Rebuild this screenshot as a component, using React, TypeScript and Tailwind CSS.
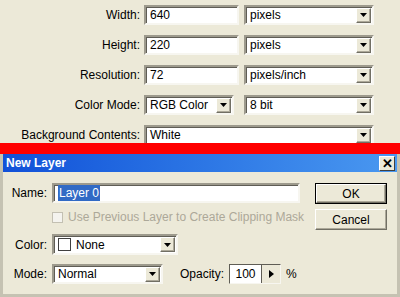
import type { ReactNode } from 'react'

const Sunken = ({ className = '', children }: { className?: string; children?: ReactNode }) => (
  <div
    className={`flex items-center h-[20px] bg-white border-2 border-t-[#9d9a8d] border-l-[#9d9a8d] border-b-[#f7f6f0] border-r-[#f7f6f0] shadow-[inset_1px_1px_0_#5f5d55] pl-[4px] ${className}`}
  >
    {children}
  </div>
)

const DropBtn = () => (
  <div className="ml-auto mr-[1px] w-[15px] h-[15px] flex items-center justify-center bg-[#ece9d8] border border-t-white border-l-white border-b-[#716f64] border-r-[#716f64] shadow-[inset_-1px_-1px_0_#aca899]">
    <svg width="7" height="4" viewBox="0 0 7 4">
      <path d="M0 0h7L3.5 4z" fill="#000" />
    </svg>
  </div>
)

const Select = ({ className = '', children }: { className?: string; children?: ReactNode }) => (
  <Sunken className={className}>
    <span className="flex-1 flex items-center">{children}</span>
    <DropBtn />
  </Sunken>
)

const TopRow = ({ label, children }: { label: string; children: ReactNode }) => (
  <div className="flex items-center h-[20px]">
    <span className="w-[140px] text-right shrink-0">{label}</span>
    <div className="flex items-center ml-[4px]">{children}</div>
  </div>
)

const Button = ({ label, isDefault }: { label: string; isDefault?: boolean }) => (
  <div className={`w-[72px] h-[21px] ${isDefault ? 'border border-black' : ''}`}>
    <div className="w-full h-full flex items-center justify-center bg-[#ece9d8] border border-t-white border-l-white border-b-[#716f64] border-r-[#716f64] shadow-[inset_-1px_-1px_0_#aca899]">
      {label}
    </div>
  </div>
)

export default function App() {
  return (
    <div className="w-[400px] h-[297px] overflow-hidden bg-[#ece9d8] text-[12px] text-black font-['Liberation_Sans',Arial,sans-serif] leading-none">
      <div className="h-[143px] overflow-hidden pt-[5px] flex flex-col gap-[10px]">
        <TopRow label="Width:">
          <Sunken className="w-[95px]">640</Sunken>
          <Select className="ml-[5px] w-[130px]">pixels</Select>
        </TopRow>
        <TopRow label="Height:">
          <Sunken className="w-[95px]">220</Sunken>
          <Select className="ml-[5px] w-[130px]">pixels</Select>
        </TopRow>
        <TopRow label="Resolution:">
          <Sunken className="w-[95px]">72</Sunken>
          <Select className="ml-[5px] w-[130px]">pixels/inch</Select>
        </TopRow>
        <TopRow label="Color Mode:">
          <Select className="w-[90px]">RGB Color</Select>
          <Select className="ml-[10px] w-[130px]">8 bit</Select>
        </TopRow>
        <TopRow label="Background Contents:">
          <Select className="w-[230px]">White</Select>
        </TopRow>
      </div>

      <div className="h-[11px] bg-[#ff0000]" />

      <div className="h-[143px] border-l-[3px] border-r-[3px] border-b-[3px] border-[#c5c2b2] flex flex-col">
        <div className="h-[18px] flex items-center bg-gradient-to-r from-[#1250d8] to-[#4a98f0] pl-[3px] pr-[2px]">
          <span className="text-white font-bold text-[12px]">New Layer</span>
          <div className="ml-auto w-[16px] h-[15px] flex items-center justify-center bg-[#ece9d8] border border-t-white border-l-white border-b-[#404040] border-r-[#404040]">
            <span className="font-bold text-[13px] leading-none">✕</span>
          </div>
        </div>

        <div className="flex pt-[11px]">
          <div className="flex flex-col">
            <div className="flex items-center h-[20px]">
              <span className="w-[44px] text-right">Name:</span>
              <Sunken className="ml-[5px] w-[248px]">
                <span className="bg-[#316ac5] text-white px-[1px] py-[2px]">Layer 0</span>
              </Sunken>
            </div>
            <div className="flex items-center h-[12px] mt-[8px] text-[#aca899]">
              <div className="ml-[49px] w-[11px] h-[11px] border border-[#c3c0b2] bg-[#f4f3ee]" />
              <span className="ml-[5px]">Use Previous Layer to Create Clipping Mask</span>
            </div>
            <div className="flex items-center h-[21px] mt-[11px]">
              <span className="w-[44px] text-right">Color:</span>
              <Select className="ml-[5px] w-[126px] h-[21px]">
                <span className="w-[13px] h-[13px] border border-[#404040] bg-white" />
                <span className="ml-[5px]">None</span>
              </Select>
            </div>
            <div className="flex items-center h-[20px] mt-[9px]">
              <span className="w-[44px] text-right">Mode:</span>
              <Select className="ml-[5px] w-[111px]">Normal</Select>
              <span className="ml-[17px]">Opacity:</span>
              <div className="ml-[5px] flex h-[20px] border border-t-[#5f5d55] border-l-[#5f5d55] border-b-[#f7f6f0] border-r-[#f7f6f0]">
                <div className="w-[32px] bg-white flex items-center justify-center border-r border-[#5f5d55]">100</div>
                <div className="w-[18px] bg-[#ece9d8] flex items-center justify-center">
                  <svg width="5" height="8" viewBox="0 0 5 8">
                    <path d="M0 0L5 4L0 8z" fill="#000" />
                  </svg>
                </div>
              </div>
              <span className="ml-[5px]">%</span>
            </div>
          </div>
          <div className="ml-auto mr-[10px] flex flex-col gap-[5px]">
            <Button label="OK" isDefault />
            <Button label="Cancel" />
          </div>
        </div>
      </div>
    </div>
  )
}
